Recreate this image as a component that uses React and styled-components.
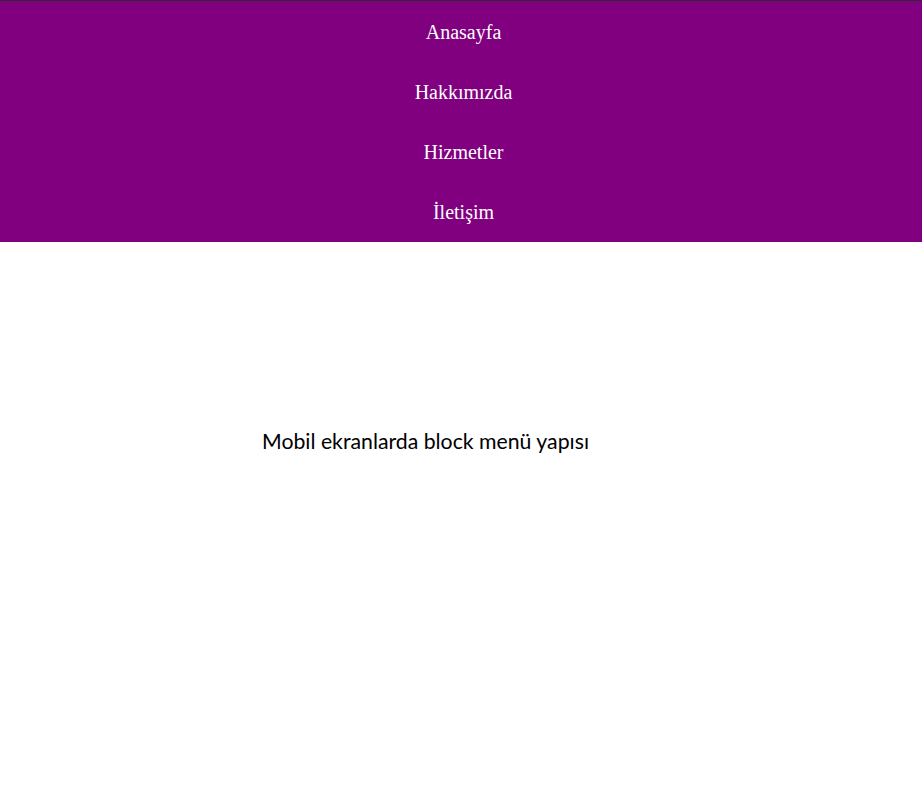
import styled, { createGlobalStyle } from 'styled-components';

const Global = createGlobalStyle`
  html, body {
    margin: 0;
    padding: 0;
    background: #ffffff;
  }
`

const menu = ['Anasayfa', 'Hakkımızda', 'Hizmetler', 'İletişim']

function App() {
  return (
    <>
      <Global />
      <Page>
        <Nav>
          {menu.map((item) => (
            <NavItem key={item} href="#">{item}</NavItem>
          ))}
        </Nav>
        <Content>
          <Caption>Mobil ekranlarda block menü yapısı</Caption>
        </Content>
      </Page>
    </>
  );
}

export default App;

const Page = styled.div`
  min-height: 798px;
  border-top: 1px solid #2e2a2e;
  box-sizing: border-box;
`

const Nav = styled.nav`
  display: flex;
  flex-direction: column;
  padding-top: 1px;
  background: #800080;
`

const NavItem = styled.a`
  display: block;
  height: 60px;
  line-height: 60px;
  padding-left: 5px;
  text-align: center;
  color: #ffffff;
  text-decoration: none;
  font-family: "Liberation Serif", "Times New Roman", serif;
  font-size: 20px;
`

const Content = styled.main`
  display: flex;
  padding: 186px 0 0 262px;
`

const Caption = styled.p`
  margin: 0;
  font-family: "Lato", "Noto Sans", sans-serif;
  font-size: 21.25px;
  color: #000000;
`
